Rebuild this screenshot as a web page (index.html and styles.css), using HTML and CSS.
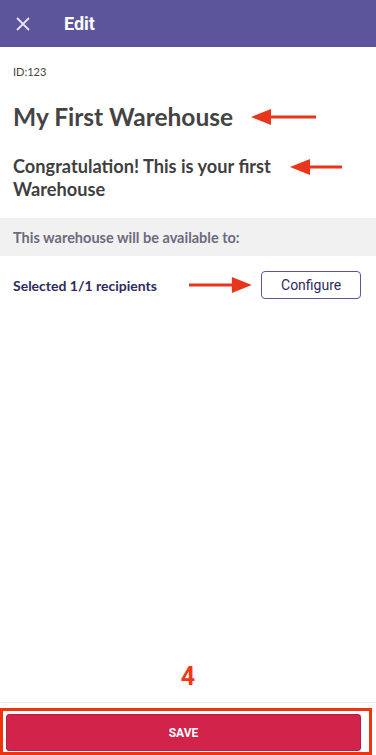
FILE: index.html
```html
<!DOCTYPE html>
<html lang="en">
<head>
  <meta charset="UTF-8" />
  <meta name="viewport" content="width=device-width, initial-scale=1.0" />
  <title>Edit</title>
  <link rel="stylesheet" href="styles.css">
</head>
<body>
  <header class="topbar">
    <button class="close" aria-label="Close">
      <svg width="14" height="14" viewBox="0 0 14 14"><path d="M1 1 L13 13 M13 1 L1 13" stroke="#e6e4f2" stroke-width="1.8" fill="none"/></svg>
    </button>
    <h1>Edit</h1>
  </header>

  <main class="content">
    <div class="id">ID:123</div>

    <div class="title-row">
      <h2 class="title">My First Warehouse</h2>
      <svg class="arrow arrow-title" width="66" height="18" viewBox="0 0 66 18"><path d="M18 9 H65" stroke="#e8351b" stroke-width="3"/><path d="M0 9 L20 1 L20 17 Z" fill="#e8351b"/></svg>
    </div>

    <div class="subtitle-row">
      <p class="subtitle">Congratulation! This is your first Warehouse</p>
      <svg class="arrow arrow-sub" width="52" height="18" viewBox="0 0 52 18"><path d="M18 9 H52" stroke="#e8351b" stroke-width="3"/><path d="M0 9 L20 1 L20 17 Z" fill="#e8351b"/></svg>
    </div>

    <div class="band">This warehouse will be available to:</div>

    <div class="recipients">
      <span class="selected">Selected 1/1 recipients</span>
      <svg class="arrow" width="63" height="18" viewBox="0 0 63 18"><path d="M0 9 H46" stroke="#e8351b" stroke-width="3"/><path d="M63 9 L43 1 L43 17 Z" fill="#e8351b"/></svg>
      <button class="configure">Configure</button>
    </div>
  </main>

  <footer class="footer">
    <div class="step">4</div>
    <div class="save-wrap">
      <div class="save-box">
        <button class="save">SAVE</button>
      </div>
    </div>
  </footer>
</body>
</html>
```

FILE: styles.css
```css
* {
  box-sizing: border-box;
}

html, body {
  height: 100%;
}

body {
  margin: 0;
  font-family: "Source Sans Pro", Lato, "Noto Sans", sans-serif;
  background: #ffffff;
  color: #444444;
  display: flex;
  flex-direction: column;
}

.topbar {
  height: 47px;
  background: #5c559b;
  display: flex;
  align-items: center;
  padding-left: 16px;
}

.close {
  background: none;
  border: none;
  padding: 0;
  width: 14px;
  height: 14px;
  display: flex;
}

.topbar h1 {
  margin: 0 0 0 34px;
  font-family: Roboto, "Noto Sans", sans-serif;
  font-size: 18px;
  font-weight: 700;
  color: #ffffff;
}

.content {
  flex: 1;
}

.id {
  font-size: 11px;
  color: #444;
  padding: 18px 13px 0;
  line-height: 14px;
}

.title-row {
  display: flex;
  align-items: center;
  padding: 23px 13px 0;
}

.title {
  margin: 0;
  font-size: 24.5px;
  line-height: 30px;
  font-weight: 700;
  color: #444;
}

.arrow-title {
  margin-left: 18px;
}

.subtitle-row {
  display: flex;
  align-items: flex-start;
  padding: 23px 13px 0;
}

.subtitle {
  margin: 0;
  width: 275px;
  font-size: 18.2px;
  line-height: 23px;
  font-weight: 700;
  color: #3f3f3f;
}

.arrow-sub {
  margin-top: 3px;
  margin-left: 2px;
}

.band {
  margin-top: 17px;
  height: 38px;
  background: #f1f1f1;
  display: flex;
  align-items: center;
  padding: 0 13px;
  font-size: 14.5px;
  font-weight: 700;
  color: #6d6b7e;
}

.recipients {
  display: flex;
  align-items: center;
  padding: 15px 15px 0 13px;
}

.selected {
  font-size: 14px;
  font-weight: 700;
  color: #2e2a60;
  width: 177px;
}

.configure {
  margin-left: 9px;
  width: 100px;
  height: 28px;
  background: #fff;
  border: 1px solid #5c559b;
  border-radius: 4px;
  font-family: Roboto, "Noto Sans", sans-serif;
  font-size: 14px;
  color: #2e2a60;
  padding: 0;
}

.footer {
  display: flex;
  flex-direction: column;
}

.step {
  text-align: center;
  font-family: Roboto, "Noto Sans", sans-serif;
  font-size: 25px;
  font-weight: 700;
  color: #f0391a;
  line-height: 28px;
  padding-bottom: 11px;
}

.save-wrap {
  border-top: 1px solid #ececec;
  padding-top: 5px;
}

.save-box {
  width: 372px;
  border: 3px solid #f0320f;
  padding: 3px 8px 0 3px;
  height: 47px;
}

.save {
  width: 100%;
  height: 37px;
  background: #d2234b;
  border: 1px solid #b81c40;
  border-radius: 3px;
  color: #fff;
  font-family: Roboto, "Noto Sans", sans-serif;
  font-size: 12px;
  font-weight: 700;
}
```
